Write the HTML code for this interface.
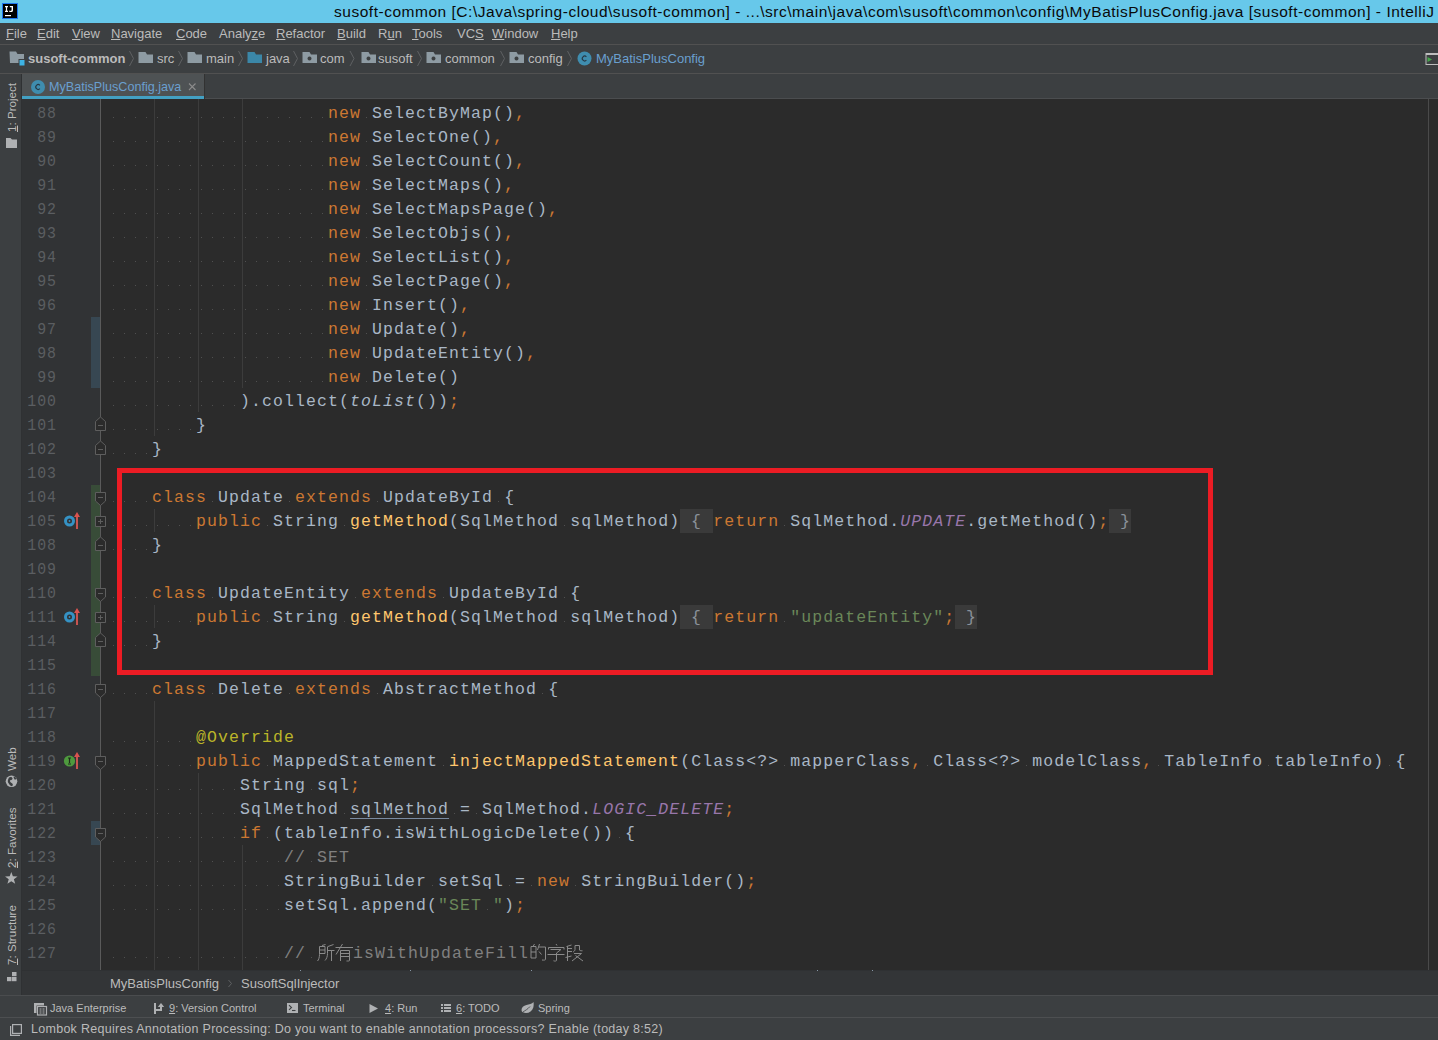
<!DOCTYPE html>
<html><head><meta charset="utf-8"><style>
*{margin:0;padding:0;box-sizing:border-box}
html,body{width:1438px;height:1040px;overflow:hidden;background:#3C3F41;font-family:"Liberation Sans",sans-serif;position:relative}
.abs{position:absolute}
#title{left:0;top:0;width:1438px;height:23px;background:#67C8EA;}
#title .t{position:absolute;left:334px;top:3px;font-size:15.5px;letter-spacing:0.52px;color:#0a0a0a;white-space:nowrap;}
#ij{left:2px;top:3px;width:16px;height:16px;background:#1e7bff;}
#ij div{position:absolute;left:1px;top:1px;width:14px;height:14px;background:#000;}
#menu{left:0;top:23px;width:1438px;height:21px;background:#3C3F41;}
#menu span{position:absolute;top:3px;font-size:13px;color:#BBBBBB;white-space:nowrap}
u{text-decoration:underline;text-decoration-thickness:1px}
.sep{height:1px;background:#515151;left:0;width:1438px}
#nav{left:0;top:45px;width:1438px;height:28px;background:#3C3F41}
#nav span{position:absolute;top:6px;font-size:13px;color:#BBBBBB;white-space:nowrap}
#left{left:0;top:74px;width:22px;height:921px;background:#3C3F41;border-right:1px solid #2F3133}
#tabs{left:22px;top:74px;width:1416px;height:25px;background:#3C3F41}
#tab{left:22px;top:74px;width:182px;height:25px;background:#4E5254}
#tabline{left:22px;top:96px;width:182px;height:3px;background:#43A0C3}
#gutter{left:22px;top:99px;width:78px;height:872px;background:#313335}
#editor{left:101px;top:99px;width:1337px;height:872px;background:#2B2B2B}

#gutterlayer,#codelayer{position:absolute;left:0;top:0;width:1438px;height:1040px}
.ln{position:absolute;left:21px;width:36px;transform:scaleX(.9);transform-origin:100% 50%;text-align:right;font-family:"Liberation Mono",monospace;font-size:16.5px;letter-spacing:1.1px;color:#5B5E61;line-height:24px;height:24px;padding-top:2px}
.code{position:absolute;left:108px;font-family:"Liberation Mono",monospace;font-size:16.5px;letter-spacing:1.1px;color:#A9B7C6;line-height:24px;height:24px;white-space:pre;padding-top:2px}
.k{color:#CC7832}.m{color:#FFC66D}.s{color:#6A8759}.c{color:#808080}.a{color:#BBB529}.st{color:#9876AA;font-style:italic}.i{font-style:italic}
.u{text-decoration:underline;text-underline-offset:4px;text-decoration-color:#7A8AA0}
.fold{position:absolute;height:24px;background:#3A3A3A}
.fold span{position:absolute;left:11px;top:0;font-family:"Liberation Mono",monospace;font-size:16.5px;line-height:24px;color:#8A9199;padding-top:1px}
.cjk{display:inline-block;color:#808080;font-size:16px;letter-spacing:0;overflow:hidden;vertical-align:top}
#crumb{left:22px;top:970px;width:1416px;height:25px;background:#333537;border-top:1px solid #2F3133}
#crumb span{position:absolute;top:5px;font-size:13px;color:#BBBBBB;white-space:nowrap}
#tools{left:0;top:995px;width:1438px;height:22px;background:#3C3F41;border-top:1px solid #4A4C4E}
#tools span{position:absolute;top:6px;font-size:11px;color:#BBBBBB;white-space:nowrap}
#status{left:0;top:1017px;width:1438px;height:23px;background:#3C3F41;border-top:1px solid #4D4F51}
#status span{position:absolute;top:4px;font-size:12.5px;letter-spacing:0.28px;color:#BBBBBB;white-space:nowrap}
.vt{position:absolute;transform-origin:0 0;transform:rotate(-90deg);font-size:11.6px;color:#BBBBBB;white-space:nowrap}
#redbox{left:117px;top:468px;width:1096px;height:207px;border:5px solid #EC1C24}

</style></head><body>
<div id="title" class="abs">
  <div class="abs" style="left:2px;top:3px;width:16px;height:16px;background:#1f78f0"></div>
  <div class="abs" style="left:3px;top:4px;width:14px;height:14px;background:#000"></div>
  <svg class="abs" style="left:0;top:0" width="20" height="20"><g fill="#fff"><path d="M5 6h3v1.2h-.9v3.6h.9V12H5v-1.2h.9V7.2H5z"/><path d="M9.8 6h3.2v4.2c0 1.3-.8 1.9-2 1.9c-.8 0-1.4-.2-2-.6l.6-1c.4.3.8.4 1.2.4c.5 0 .8-.3.8-.8V7.2h-1.8z"/><rect x="5" y="15" width="6" height="1.2"/></g></svg>
  <div class="t">susoft-common [C:\Java\spring-cloud\susoft-common] - ...\src\main\java\com\susoft\common\config\MyBatisPlusConfig.java [susoft-common] - IntelliJ IDEA</div>
</div>
<div id="menu" class="abs">
  <span style="left:6px"><u>F</u>ile</span>
  <span style="left:37px"><u>E</u>dit</span>
  <span style="left:72px"><u>V</u>iew</span>
  <span style="left:111px"><u>N</u>avigate</span>
  <span style="left:176px"><u>C</u>ode</span>
  <span style="left:219px">Analy<u>z</u>e</span>
  <span style="left:276px"><u>R</u>efactor</span>
  <span style="left:337px"><u>B</u>uild</span>
  <span style="left:378px">R<u>u</u>n</span>
  <span style="left:412px"><u>T</u>ools</span>
  <span style="left:457px">VC<u>S</u></span>
  <span style="left:492px"><u>W</u>indow</span>
  <span style="left:551px"><u>H</u>elp</span>
</div>
<div class="abs sep" style="top:44px"></div>
<div id="nav" class="abs">
  <span style="left:28px;font-weight:bold">susoft-common</span>
  <span style="left:157px">src</span>
  <span style="left:206px">main</span>
  <span style="left:266px">java</span>
  <span style="left:320px">com</span>
  <span style="left:378px">susoft</span>
  <span style="left:445px">common</span>
  <span style="left:528px">config</span>
  <span style="left:596px;color:#6A9FCF">MyBatisPlusConfig</span>
</div>
<svg class="abs" style="left:0;top:45px" width="720" height="28">
  <g fill="#8E9BA3">
    <path d="M9.5 6.5h6.5l1.5 2.5h6.5v9h-14z"/>
    <path d="M138.5 7h7l1.5 2.5h6v8.5h-14.5z"/>
    <path d="M187.5 7h7l1.5 2.5h6v8.5h-14.5z"/>
    <path d="M302.5 7h7l1.5 2.5h6v8.5h-14.5z M309.5 11.5a2 2 0 1 0 0.01 0z" fill-rule="evenodd"/>
    <path d="M361.5 7h7l1.5 2.5h6v8.5h-14.5z M368.5 11.5a2 2 0 1 0 0.01 0z" fill-rule="evenodd"/>
    <path d="M426.5 7h7l1.5 2.5h6v8.5h-14.5z M433.5 11.5a2 2 0 1 0 0.01 0z" fill-rule="evenodd"/>
    <path d="M509.5 7h7l1.5 2.5h6v8.5h-14.5z M516.5 11.5a2 2 0 1 0 0.01 0z" fill-rule="evenodd"/>
  </g>
  <path d="M247.5 7h7l1.5 2.5h6v8.5h-14.5z" fill="#3B87A8"/>
  <rect x="19" y="14.5" width="6" height="6.5" fill="#3DB2E3" stroke="#3C3F41" stroke-width="1"/>
  <circle cx="584.5" cy="13.5" r="7" fill="#3F8DAF"/>
  <path d="M586.4 11.8a2.4 2.4 0 1 0 0 3.4" fill="none" stroke="#263845" stroke-width="1.1"/>
  <g fill="none" stroke="#5F6163" stroke-width="1">
    <path d="M129.5 6l4 7.5l-4 7.5"/>
    <path d="M178.5 6l4 7.5l-4 7.5"/>
    <path d="M238.5 6l4 7.5l-4 7.5"/>
    <path d="M293.5 6l4 7.5l-4 7.5"/>
    <path d="M350 6l4 7.5l-4 7.5"/>
    <path d="M417.5 6l4 7.5l-4 7.5"/>
    <path d="M500.5 6l4 7.5l-4 7.5"/>
    <path d="M567.5 6l4 7.5l-4 7.5"/>
  </g>
</svg>
<svg class="abs" style="left:1422px;top:45px" width="16" height="28">
  <rect x="4" y="8.5" width="14" height="11" fill="none" stroke="#BDBDBD" stroke-width="1"/>
  <rect x="4" y="8" width="14" height="2" fill="#BDBDBD"/>
  <path d="M5.5 12l4.5 2.5l-4.5 2.5z" fill="#45A84B"/>
</svg>
<div class="abs sep" style="top:73px"></div>
<div id="left" class="abs">
  <div class="vt" style="left:5.3px;top:57.6px"><u>1</u>: Project</div>
  <div class="vt" style="left:5.3px;top:696.5px">Web</div>
  <div class="vt" style="left:5.3px;top:793.7px"><u>2</u>: Favorites</div>
  <div class="vt" style="left:5.3px;top:891px"><u>7</u>: Structure</div>
  <svg class="abs" style="left:0;top:0" width="22" height="921">
    <path d="M6 64h4.5l1.5 1.5h5v8.5h-11z" fill="#AFB1B3"/>
    <circle cx="11.5" cy="707.3" r="5.8" fill="#AFB1B3"/>
    <path d="M9 703.5c1.5-1 3-.5 3.5.8c.3 1.2-1 2-2.2 1.8c-1 1.5 .5 2.8 2 3.5c1 .8 .5 2.2-.5 2.6c-1.6-.5-2.6-2-3.6-3.5c-.8-1.4-.3-3.4 .8-5.2z M13.5 702.5c1.4.3 2.6 1.2 3.2 2.5l-1.8 .8c-.6-.7-1.2-1.5-1.4-3.3z" fill="#3C3F41"/>
    <path d="M11.30 797.90L12.89 802.32L17.58 802.46L13.87 805.33L15.18 809.84L11.30 807.20L7.42 809.84L8.73 805.33L5.02 802.46L9.71 802.32Z" fill="#AFB1B3"/>
    <rect x="12" y="898" width="4.5" height="4.2" fill="#AFB1B3"/>
    <rect x="7" y="903" width="4.5" height="4.2" fill="#AFB1B3"/>
    <rect x="12" y="903" width="4.5" height="4.2" fill="#AFB1B3"/>
  </svg>
</div>
<div id="tabs" class="abs"></div>
<div id="tab" class="abs"></div>
<div class="abs" style="left:204px;top:98px;width:1234px;height:1px;background:#4B4D4F"></div>
<div class="abs" style="left:204px;top:74px;width:1px;height:25px;background:#323232"></div>
<div id="tabline" class="abs"></div>
<svg class="abs" style="left:22px;top:74px" width="182" height="22">
  <circle cx="16" cy="13" r="7" fill="#3F8DAF"/>
  <path d="M17.9 11.3a2.4 2.4 0 1 0 0 3.4" fill="none" stroke="#263845" stroke-width="1.1"/>
  <path d="M167 9.5l6.5 6.5M173.5 9.5l-6.5 6.5" stroke="#8C8C8C" stroke-width="1.1"/>
</svg>
<div class="abs" style="left:49px;top:80px;font-size:12.6px;color:#6A9FCF;white-space:nowrap">MyBatisPlusConfig.java</div>
<div id="gutter" class="abs"></div>
<div id="editor" class="abs"></div>
<div class="abs" style="left:1428px;top:99px;width:1px;height:872px;background:#4A4A4A"></div>
<div id="gutterlayer"><div class="ln" style="top:100px">88</div><div class="ln" style="top:124px">89</div><div class="ln" style="top:148px">90</div><div class="ln" style="top:172px">91</div><div class="ln" style="top:196px">92</div><div class="ln" style="top:220px">93</div><div class="ln" style="top:244px">94</div><div class="ln" style="top:268px">95</div><div class="ln" style="top:292px">96</div><div class="ln" style="top:316px">97</div><div class="ln" style="top:340px">98</div><div class="ln" style="top:364px">99</div><div class="ln" style="top:388px">100</div><div class="ln" style="top:412px">101</div><div class="ln" style="top:436px">102</div><div class="ln" style="top:460px">103</div><div class="ln" style="top:484px">104</div><div class="ln" style="top:508px">105</div><div class="ln" style="top:532px">108</div><div class="ln" style="top:556px">109</div><div class="ln" style="top:580px">110</div><div class="ln" style="top:604px">111</div><div class="ln" style="top:628px">114</div><div class="ln" style="top:652px">115</div><div class="ln" style="top:676px">116</div><div class="ln" style="top:700px">117</div><div class="ln" style="top:724px">118</div><div class="ln" style="top:748px">119</div><div class="ln" style="top:772px">120</div><div class="ln" style="top:796px">121</div><div class="ln" style="top:820px">122</div><div class="ln" style="top:844px">123</div><div class="ln" style="top:868px">124</div><div class="ln" style="top:892px">125</div><div class="ln" style="top:916px">126</div><div class="ln" style="top:940px">127</div></div><div id="codelayer"><svg class="abs" style="left:0;top:0" width="1438" height="1040"><rect x="91" y="317" width="9" height="71" fill="#374752"/><rect x="91" y="485" width="9" height="191" fill="#384C38"/><rect x="91" y="821" width="9" height="24" fill="#374752"/><rect x="100" y="99" width="1" height="872" fill="#5A5A5A"/><path fill="#2B2B2B" stroke="#5E5E5E" stroke-width="1" d="M95.5 430.5H105.5V421.5L100.5 417.0L95.5 421.5Z"/><path stroke="#5E5E5E" d="M98 425.5H103"/><path fill="#2B2B2B" stroke="#5E5E5E" stroke-width="1" d="M95.5 454.5H105.5V445.5L100.5 441.0L95.5 445.5Z"/><path stroke="#5E5E5E" d="M98 449.5H103"/><path fill="#2B2B2B" stroke="#5E5E5E" stroke-width="1" d="M95.5 550.5H105.5V541.5L100.5 537.0L95.5 541.5Z"/><path stroke="#5E5E5E" d="M98 545.5H103"/><path fill="#2B2B2B" stroke="#5E5E5E" stroke-width="1" d="M95.5 646.5H105.5V637.5L100.5 633.0L95.5 637.5Z"/><path stroke="#5E5E5E" d="M98 641.5H103"/><path fill="#2B2B2B" stroke="#5E5E5E" stroke-width="1" d="M95.5 492.5H105.5V501.0L100.5 505.5L95.5 501.0Z"/><path stroke="#5E5E5E" d="M98 497.5H103"/><path fill="#2B2B2B" stroke="#5E5E5E" stroke-width="1" d="M95.5 588.5H105.5V597.0L100.5 601.5L95.5 597.0Z"/><path stroke="#5E5E5E" d="M98 593.5H103"/><path fill="#2B2B2B" stroke="#5E5E5E" stroke-width="1" d="M95.5 684.5H105.5V693.0L100.5 697.5L95.5 693.0Z"/><path stroke="#5E5E5E" d="M98 689.5H103"/><path fill="#2B2B2B" stroke="#5E5E5E" stroke-width="1" d="M95.5 756.5H105.5V765.0L100.5 769.5L95.5 765.0Z"/><path stroke="#5E5E5E" d="M98 761.5H103"/><path fill="#2B2B2B" stroke="#5E5E5E" stroke-width="1" d="M95.5 828.5H105.5V837.0L100.5 841.5L95.5 837.0Z"/><path stroke="#5E5E5E" d="M98 833.5H103"/><path fill="#2B2B2B" stroke="#5E5E5E" stroke-width="1" d="M95.5 516.5H105.5V526.5H95.5Z"/><path stroke="#5E5E5E" d="M98 521.5H103M100.5 519.0V524.0"/><path fill="#2B2B2B" stroke="#5E5E5E" stroke-width="1" d="M95.5 612.5H105.5V622.5H95.5Z"/><path stroke="#5E5E5E" d="M98 617.5H103M100.5 615.0V620.0"/><circle cx="69.5" cy="521.0" r="4" fill="none" stroke="#3592C4" stroke-width="3"/><circle cx="69.5" cy="521.0" r="0.9" fill="#3592C4"/><path d="M77 529.0V517.0" stroke="#C75450" stroke-width="2"/><path d="M74 517.0L77 512.0L80 517.0Z" fill="#D9534F"/><circle cx="69.5" cy="617.0" r="4" fill="none" stroke="#3592C4" stroke-width="3"/><circle cx="69.5" cy="617.0" r="0.9" fill="#3592C4"/><path d="M77 625.0V613.0" stroke="#C75450" stroke-width="2"/><path d="M74 613.0L77 608.0L80 613.0Z" fill="#D9534F"/><circle cx="69.5" cy="761.0" r="5.6" fill="#4E9A3E"/><path d="M68 758.0h3M68 764.0h3M69.5 758.0v5" stroke="#1f2a1c" stroke-width="1.2"/><path d="M77 769.0V757.0" stroke="#C75450" stroke-width="2"/><path d="M74 757.0L77 752.0L80 757.0Z" fill="#D9534F"/><rect x="154" y="99" width="1" height="337" fill="#3C3C3C"/><rect x="198" y="99" width="1" height="313" fill="#3C3C3C"/><rect x="242" y="99" width="1" height="289" fill="#3C3C3C"/><rect x="154" y="509" width="1" height="23" fill="#3C3C3C"/><rect x="154" y="605" width="1" height="23" fill="#3C3C3C"/><rect x="154" y="701" width="1" height="270" fill="#3C3C3C"/><rect x="198" y="773" width="1" height="198" fill="#3C3C3C"/><rect x="242" y="845" width="1" height="126" fill="#3C3C3C"/></svg><svg class="abs" style="left:0;top:0" width="1438" height="1040"><path fill="#505050" d="M113 117h1v1h-1zM124 117h1v1h-1zM135 117h1v1h-1zM146 117h1v1h-1zM157 117h1v1h-1zM168 117h1v1h-1zM179 117h1v1h-1zM190 117h1v1h-1zM201 117h1v1h-1zM212 117h1v1h-1zM223 117h1v1h-1zM234 117h1v1h-1zM245 117h1v1h-1zM256 117h1v1h-1zM267 117h1v1h-1zM278 117h1v1h-1zM289 117h1v1h-1zM300 117h1v1h-1zM311 117h1v1h-1zM322 117h1v1h-1zM366 117h1v1h-1zM113 141h1v1h-1zM124 141h1v1h-1zM135 141h1v1h-1zM146 141h1v1h-1zM157 141h1v1h-1zM168 141h1v1h-1zM179 141h1v1h-1zM190 141h1v1h-1zM201 141h1v1h-1zM212 141h1v1h-1zM223 141h1v1h-1zM234 141h1v1h-1zM245 141h1v1h-1zM256 141h1v1h-1zM267 141h1v1h-1zM278 141h1v1h-1zM289 141h1v1h-1zM300 141h1v1h-1zM311 141h1v1h-1zM322 141h1v1h-1zM366 141h1v1h-1zM113 165h1v1h-1zM124 165h1v1h-1zM135 165h1v1h-1zM146 165h1v1h-1zM157 165h1v1h-1zM168 165h1v1h-1zM179 165h1v1h-1zM190 165h1v1h-1zM201 165h1v1h-1zM212 165h1v1h-1zM223 165h1v1h-1zM234 165h1v1h-1zM245 165h1v1h-1zM256 165h1v1h-1zM267 165h1v1h-1zM278 165h1v1h-1zM289 165h1v1h-1zM300 165h1v1h-1zM311 165h1v1h-1zM322 165h1v1h-1zM366 165h1v1h-1zM113 189h1v1h-1zM124 189h1v1h-1zM135 189h1v1h-1zM146 189h1v1h-1zM157 189h1v1h-1zM168 189h1v1h-1zM179 189h1v1h-1zM190 189h1v1h-1zM201 189h1v1h-1zM212 189h1v1h-1zM223 189h1v1h-1zM234 189h1v1h-1zM245 189h1v1h-1zM256 189h1v1h-1zM267 189h1v1h-1zM278 189h1v1h-1zM289 189h1v1h-1zM300 189h1v1h-1zM311 189h1v1h-1zM322 189h1v1h-1zM366 189h1v1h-1zM113 213h1v1h-1zM124 213h1v1h-1zM135 213h1v1h-1zM146 213h1v1h-1zM157 213h1v1h-1zM168 213h1v1h-1zM179 213h1v1h-1zM190 213h1v1h-1zM201 213h1v1h-1zM212 213h1v1h-1zM223 213h1v1h-1zM234 213h1v1h-1zM245 213h1v1h-1zM256 213h1v1h-1zM267 213h1v1h-1zM278 213h1v1h-1zM289 213h1v1h-1zM300 213h1v1h-1zM311 213h1v1h-1zM322 213h1v1h-1zM366 213h1v1h-1zM113 237h1v1h-1zM124 237h1v1h-1zM135 237h1v1h-1zM146 237h1v1h-1zM157 237h1v1h-1zM168 237h1v1h-1zM179 237h1v1h-1zM190 237h1v1h-1zM201 237h1v1h-1zM212 237h1v1h-1zM223 237h1v1h-1zM234 237h1v1h-1zM245 237h1v1h-1zM256 237h1v1h-1zM267 237h1v1h-1zM278 237h1v1h-1zM289 237h1v1h-1zM300 237h1v1h-1zM311 237h1v1h-1zM322 237h1v1h-1zM366 237h1v1h-1zM113 261h1v1h-1zM124 261h1v1h-1zM135 261h1v1h-1zM146 261h1v1h-1zM157 261h1v1h-1zM168 261h1v1h-1zM179 261h1v1h-1zM190 261h1v1h-1zM201 261h1v1h-1zM212 261h1v1h-1zM223 261h1v1h-1zM234 261h1v1h-1zM245 261h1v1h-1zM256 261h1v1h-1zM267 261h1v1h-1zM278 261h1v1h-1zM289 261h1v1h-1zM300 261h1v1h-1zM311 261h1v1h-1zM322 261h1v1h-1zM366 261h1v1h-1zM113 285h1v1h-1zM124 285h1v1h-1zM135 285h1v1h-1zM146 285h1v1h-1zM157 285h1v1h-1zM168 285h1v1h-1zM179 285h1v1h-1zM190 285h1v1h-1zM201 285h1v1h-1zM212 285h1v1h-1zM223 285h1v1h-1zM234 285h1v1h-1zM245 285h1v1h-1zM256 285h1v1h-1zM267 285h1v1h-1zM278 285h1v1h-1zM289 285h1v1h-1zM300 285h1v1h-1zM311 285h1v1h-1zM322 285h1v1h-1zM366 285h1v1h-1zM113 309h1v1h-1zM124 309h1v1h-1zM135 309h1v1h-1zM146 309h1v1h-1zM157 309h1v1h-1zM168 309h1v1h-1zM179 309h1v1h-1zM190 309h1v1h-1zM201 309h1v1h-1zM212 309h1v1h-1zM223 309h1v1h-1zM234 309h1v1h-1zM245 309h1v1h-1zM256 309h1v1h-1zM267 309h1v1h-1zM278 309h1v1h-1zM289 309h1v1h-1zM300 309h1v1h-1zM311 309h1v1h-1zM322 309h1v1h-1zM366 309h1v1h-1zM113 333h1v1h-1zM124 333h1v1h-1zM135 333h1v1h-1zM146 333h1v1h-1zM157 333h1v1h-1zM168 333h1v1h-1zM179 333h1v1h-1zM190 333h1v1h-1zM201 333h1v1h-1zM212 333h1v1h-1zM223 333h1v1h-1zM234 333h1v1h-1zM245 333h1v1h-1zM256 333h1v1h-1zM267 333h1v1h-1zM278 333h1v1h-1zM289 333h1v1h-1zM300 333h1v1h-1zM311 333h1v1h-1zM322 333h1v1h-1zM366 333h1v1h-1zM113 357h1v1h-1zM124 357h1v1h-1zM135 357h1v1h-1zM146 357h1v1h-1zM157 357h1v1h-1zM168 357h1v1h-1zM179 357h1v1h-1zM190 357h1v1h-1zM201 357h1v1h-1zM212 357h1v1h-1zM223 357h1v1h-1zM234 357h1v1h-1zM245 357h1v1h-1zM256 357h1v1h-1zM267 357h1v1h-1zM278 357h1v1h-1zM289 357h1v1h-1zM300 357h1v1h-1zM311 357h1v1h-1zM322 357h1v1h-1zM366 357h1v1h-1zM113 381h1v1h-1zM124 381h1v1h-1zM135 381h1v1h-1zM146 381h1v1h-1zM157 381h1v1h-1zM168 381h1v1h-1zM179 381h1v1h-1zM190 381h1v1h-1zM201 381h1v1h-1zM212 381h1v1h-1zM223 381h1v1h-1zM234 381h1v1h-1zM245 381h1v1h-1zM256 381h1v1h-1zM267 381h1v1h-1zM278 381h1v1h-1zM289 381h1v1h-1zM300 381h1v1h-1zM311 381h1v1h-1zM322 381h1v1h-1zM366 381h1v1h-1zM113 405h1v1h-1zM124 405h1v1h-1zM135 405h1v1h-1zM146 405h1v1h-1zM157 405h1v1h-1zM168 405h1v1h-1zM179 405h1v1h-1zM190 405h1v1h-1zM201 405h1v1h-1zM212 405h1v1h-1zM223 405h1v1h-1zM234 405h1v1h-1zM113 429h1v1h-1zM124 429h1v1h-1zM135 429h1v1h-1zM146 429h1v1h-1zM157 429h1v1h-1zM168 429h1v1h-1zM179 429h1v1h-1zM190 429h1v1h-1zM113 453h1v1h-1zM124 453h1v1h-1zM135 453h1v1h-1zM146 453h1v1h-1zM113 501h1v1h-1zM124 501h1v1h-1zM135 501h1v1h-1zM146 501h1v1h-1zM212 501h1v1h-1zM289 501h1v1h-1zM377 501h1v1h-1zM498 501h1v1h-1zM113 525h1v1h-1zM124 525h1v1h-1zM135 525h1v1h-1zM146 525h1v1h-1zM157 525h1v1h-1zM168 525h1v1h-1zM179 525h1v1h-1zM190 525h1v1h-1zM267 525h1v1h-1zM344 525h1v1h-1zM564 525h1v1h-1zM784 525h1v1h-1zM113 549h1v1h-1zM124 549h1v1h-1zM135 549h1v1h-1zM146 549h1v1h-1zM113 597h1v1h-1zM124 597h1v1h-1zM135 597h1v1h-1zM146 597h1v1h-1zM212 597h1v1h-1zM355 597h1v1h-1zM443 597h1v1h-1zM564 597h1v1h-1zM113 621h1v1h-1zM124 621h1v1h-1zM135 621h1v1h-1zM146 621h1v1h-1zM157 621h1v1h-1zM168 621h1v1h-1zM179 621h1v1h-1zM190 621h1v1h-1zM267 621h1v1h-1zM344 621h1v1h-1zM564 621h1v1h-1zM784 621h1v1h-1zM113 645h1v1h-1zM124 645h1v1h-1zM135 645h1v1h-1zM146 645h1v1h-1zM113 693h1v1h-1zM124 693h1v1h-1zM135 693h1v1h-1zM146 693h1v1h-1zM212 693h1v1h-1zM289 693h1v1h-1zM377 693h1v1h-1zM542 693h1v1h-1zM113 741h1v1h-1zM124 741h1v1h-1zM135 741h1v1h-1zM146 741h1v1h-1zM157 741h1v1h-1zM168 741h1v1h-1zM179 741h1v1h-1zM190 741h1v1h-1zM113 765h1v1h-1zM124 765h1v1h-1zM135 765h1v1h-1zM146 765h1v1h-1zM157 765h1v1h-1zM168 765h1v1h-1zM179 765h1v1h-1zM190 765h1v1h-1zM267 765h1v1h-1zM443 765h1v1h-1zM784 765h1v1h-1zM927 765h1v1h-1zM1026 765h1v1h-1zM1158 765h1v1h-1zM1268 765h1v1h-1zM1389 765h1v1h-1zM113 789h1v1h-1zM124 789h1v1h-1zM135 789h1v1h-1zM146 789h1v1h-1zM157 789h1v1h-1zM168 789h1v1h-1zM179 789h1v1h-1zM190 789h1v1h-1zM201 789h1v1h-1zM212 789h1v1h-1zM223 789h1v1h-1zM234 789h1v1h-1zM311 789h1v1h-1zM113 813h1v1h-1zM124 813h1v1h-1zM135 813h1v1h-1zM146 813h1v1h-1zM157 813h1v1h-1zM168 813h1v1h-1zM179 813h1v1h-1zM190 813h1v1h-1zM201 813h1v1h-1zM212 813h1v1h-1zM223 813h1v1h-1zM234 813h1v1h-1zM344 813h1v1h-1zM454 813h1v1h-1zM476 813h1v1h-1zM113 837h1v1h-1zM124 837h1v1h-1zM135 837h1v1h-1zM146 837h1v1h-1zM157 837h1v1h-1zM168 837h1v1h-1zM179 837h1v1h-1zM190 837h1v1h-1zM201 837h1v1h-1zM212 837h1v1h-1zM223 837h1v1h-1zM234 837h1v1h-1zM267 837h1v1h-1zM619 837h1v1h-1zM113 861h1v1h-1zM124 861h1v1h-1zM135 861h1v1h-1zM146 861h1v1h-1zM157 861h1v1h-1zM168 861h1v1h-1zM179 861h1v1h-1zM190 861h1v1h-1zM201 861h1v1h-1zM212 861h1v1h-1zM223 861h1v1h-1zM234 861h1v1h-1zM245 861h1v1h-1zM256 861h1v1h-1zM267 861h1v1h-1zM278 861h1v1h-1zM311 861h1v1h-1zM113 885h1v1h-1zM124 885h1v1h-1zM135 885h1v1h-1zM146 885h1v1h-1zM157 885h1v1h-1zM168 885h1v1h-1zM179 885h1v1h-1zM190 885h1v1h-1zM201 885h1v1h-1zM212 885h1v1h-1zM223 885h1v1h-1zM234 885h1v1h-1zM245 885h1v1h-1zM256 885h1v1h-1zM267 885h1v1h-1zM278 885h1v1h-1zM432 885h1v1h-1zM509 885h1v1h-1zM531 885h1v1h-1zM575 885h1v1h-1zM113 909h1v1h-1zM124 909h1v1h-1zM135 909h1v1h-1zM146 909h1v1h-1zM157 909h1v1h-1zM168 909h1v1h-1zM179 909h1v1h-1zM190 909h1v1h-1zM201 909h1v1h-1zM212 909h1v1h-1zM223 909h1v1h-1zM234 909h1v1h-1zM245 909h1v1h-1zM256 909h1v1h-1zM267 909h1v1h-1zM278 909h1v1h-1zM487 909h1v1h-1zM113 957h1v1h-1zM124 957h1v1h-1zM135 957h1v1h-1zM146 957h1v1h-1zM157 957h1v1h-1zM168 957h1v1h-1zM179 957h1v1h-1zM190 957h1v1h-1zM201 957h1v1h-1zM212 957h1v1h-1zM223 957h1v1h-1zM234 957h1v1h-1zM245 957h1v1h-1zM256 957h1v1h-1zM267 957h1v1h-1zM278 957h1v1h-1zM311 957h1v1h-1z"/></svg><div class="fold" style="left:680px;top:509px;width:33px"><span>{</span></div><div class="fold" style="left:1109px;top:509px;width:22px"><span style="left:11px">}</span></div><div class="fold" style="left:680px;top:605px;width:33px"><span>{</span></div><div class="fold" style="left:955px;top:605px;width:22px"><span style="left:11px">}</span></div><div class="code" style="left:328px;top:100px"><span class="k">new</span><span> </span><span>SelectByMap()</span><span class="k">,</span></div><div class="code" style="left:328px;top:124px"><span class="k">new</span><span> </span><span>SelectOne()</span><span class="k">,</span></div><div class="code" style="left:328px;top:148px"><span class="k">new</span><span> </span><span>SelectCount()</span><span class="k">,</span></div><div class="code" style="left:328px;top:172px"><span class="k">new</span><span> </span><span>SelectMaps()</span><span class="k">,</span></div><div class="code" style="left:328px;top:196px"><span class="k">new</span><span> </span><span>SelectMapsPage()</span><span class="k">,</span></div><div class="code" style="left:328px;top:220px"><span class="k">new</span><span> </span><span>SelectObjs()</span><span class="k">,</span></div><div class="code" style="left:328px;top:244px"><span class="k">new</span><span> </span><span>SelectList()</span><span class="k">,</span></div><div class="code" style="left:328px;top:268px"><span class="k">new</span><span> </span><span>SelectPage()</span><span class="k">,</span></div><div class="code" style="left:328px;top:292px"><span class="k">new</span><span> </span><span>Insert()</span><span class="k">,</span></div><div class="code" style="left:328px;top:316px"><span class="k">new</span><span> </span><span>Update()</span><span class="k">,</span></div><div class="code" style="left:328px;top:340px"><span class="k">new</span><span> </span><span>UpdateEntity()</span><span class="k">,</span></div><div class="code" style="left:328px;top:364px"><span class="k">new</span><span> </span><span>Delete()</span></div><div class="code" style="left:240px;top:388px"><span>).collect(</span><span class="i">toList</span><span>())</span><span class="k">;</span></div><div class="code" style="left:196px;top:412px"><span>}</span></div><div class="code" style="left:152px;top:436px"><span>}</span></div><div class="code" style="left:152px;top:484px"><span class="k">class</span><span> </span><span>Update</span><span> </span><span class="k">extends</span><span> </span><span>UpdateById</span><span> </span><span>{</span></div><div class="code" style="left:196px;top:508px"><span class="k">public</span><span> </span><span>String</span><span> </span><span class="m">getMethod</span><span>(SqlMethod</span><span> </span><span>sqlMethod)</span><span class="sp3">   </span><span class="k">return</span><span> </span><span>SqlMethod.</span><span class="st">UPDATE</span><span>.getMethod()</span><span class="k">;</span><span>  </span></div><div class="code" style="left:152px;top:532px"><span>}</span></div><div class="code" style="left:152px;top:580px"><span class="k">class</span><span> </span><span>UpdateEntity</span><span> </span><span class="k">extends</span><span> </span><span>UpdateById</span><span> </span><span>{</span></div><div class="code" style="left:196px;top:604px"><span class="k">public</span><span> </span><span>String</span><span> </span><span class="m">getMethod</span><span>(SqlMethod</span><span> </span><span>sqlMethod)</span><span class="sp3">   </span><span class="k">return</span><span> </span><span class="s">&quot;updateEntity&quot;</span><span class="k">;</span><span>  </span></div><div class="code" style="left:152px;top:628px"><span>}</span></div><div class="code" style="left:152px;top:676px"><span class="k">class</span><span> </span><span>Delete</span><span> </span><span class="k">extends</span><span> </span><span>AbstractMethod</span><span> </span><span>{</span></div><div class="code" style="left:196px;top:724px"><span class="a">@Override</span></div><div class="code" style="left:196px;top:748px"><span class="k">public</span><span> </span><span>MappedStatement</span><span> </span><span class="m">injectMappedStatement</span><span>(Class&lt;?&gt;</span><span> </span><span>mapperClass</span><span class="k">,</span><span> </span><span>Class&lt;?&gt;</span><span> </span><span>modelClass</span><span class="k">,</span><span> </span><span>TableInfo</span><span> </span><span>tableInfo)</span><span> </span><span>{</span></div><div class="code" style="left:240px;top:772px"><span>String</span><span> </span><span>sql</span><span class="k">;</span></div><div class="code" style="left:240px;top:796px"><span>SqlMethod</span><span> </span><span class=" u">sqlMethod</span><span> </span><span>=</span><span> </span><span>SqlMethod.</span><span class="st">LOGIC_DELETE</span><span class="k">;</span></div><div class="code" style="left:240px;top:820px"><span class="k">if</span><span> </span><span>(tableInfo.isWithLogicDelete())</span><span> </span><span>{</span></div><div class="code" style="left:284px;top:844px"><span class="c">//</span><span> </span><span class="c">SET</span></div><div class="code" style="left:284px;top:868px"><span>StringBuilder</span><span> </span><span>setSql</span><span> </span><span>=</span><span> </span><span class="k">new</span><span> </span><span>StringBuilder()</span><span class="k">;</span></div><div class="code" style="left:284px;top:892px"><span>setSql.append(</span><span class="s">&quot;SET</span><span class="s"> </span><span class="s">&quot;</span><span>)</span><span class="k">;</span></div><div class="code" style="left:284px;top:940px"><span class="c">//</span><span> </span><span class="cjk" style="width:36px"></span><span class="c">isWithUpdateFill</span><span class="cjk" style="width:54px"></span></div><svg class="abs" style="left:0;top:0" width="1438" height="1040"><path fill="none" stroke="#8A8A8A" stroke-width="1" d="M322 945.5l3.5-1M319.5 946.5h5.5v7h-5.5M319.5 950h5.5M319.5 946.5v8c0 3-1 5.5-2 6.5M333.5 944.5l-5.5 2M327.5 946.5v7c0 3-1 5.5-2.5 7M327.5 950.5h7M331.5 950.5v10.5M335.5 947.5h17.5M342.5 944l-6.5 10.5M340.5 950.5v10.5M340.5 950.5h9v10c0 .5-1 .5-3 .5M340.5 953.5h9M340.5 956.5h9M534.5 944l-1.5 2.5M531 946.5h5v11.5h-5zM531 952h5M539.5 944l-2 6M539 947h6.5v12.5c0 .5-1.5 .8-3.5.5M539 951.5l2.5 3M556 944l1 1.5M548.5 949.5v-2h15.5v2M550.5 949.5h10.5l-4.5 3.5v7.5c0 .5-1.5.8-3 .3M547.5 954.5h17M566.5 946.5l5-1.5M567.5 946v15M567.5 948.5h4.5M567.5 951.5h4.5M565.5 957.5l6-1.5M575 945.5v4c0 1-.8 2-2 2.5M575 945.5h4.5v4.5c0 .5 1 .8 3 .8M574 953.5h7.5l-9.5 7.5M575.5 955.5l7.5 5.5"/></svg></div><div id="redbox" class="abs"></div>
<div id="crumb" class="abs">
  <span style="left:88px">MyBatisPlusConfig</span>
  <span style="left:219px">SusoftSqlInjector</span>
  <svg class="abs" style="left:200px;top:0" width="20" height="24"><path d="M6.5 9l3 3.5l-3 3.5" fill="none" stroke="#5F6163" stroke-width="1"/></svg>
</div>
<svg class="abs" style="left:0;top:969px" width="1438" height="2"><g fill="#8796A5"><rect x="300" y="1" width="1" height="1"/><rect x="410" y="1" width="1" height="1"/><rect x="531" y="1" width="1" height="1"/><rect x="817" y="1" width="1" height="1"/><rect x="872" y="1" width="1" height="1"/></g></svg>
<div id="tools" class="abs">
  <span style="left:50px">Java Enterprise</span>
  <span style="left:169px"><u>9</u>: Version Control</span>
  <span style="left:303px">Terminal</span>
  <span style="left:385px"><u>4</u>: Run</span>
  <span style="left:456px"><u>6</u>: TODO</span>
  <span style="left:538px">Spring</span>
  <svg class="abs" style="left:0;top:-995px" width="600" height="1040">
    <g fill="#AFB1B3">
      <path d="M34 1002h10v2.5h-7.5v7.5h-2.5z"/>
      <rect x="37.5" y="1005.5" width="9" height="8.5" fill="none" stroke="#AFB1B3" stroke-width="1.2"/>
      <path d="M39.5 1008h2M39.5 1010h2M39.5 1012h2M42.5 1008h2M42.5 1010h2M42.5 1012h2" stroke="#AFB1B3" stroke-width="1"/>
      <rect x="154" y="1002" width="2" height="11"/>
      <rect x="156" y="1008" width="6" height="2"/>
      <rect x="160" y="1005" width="2" height="4"/>
      <path d="M157.8 1006L161 1002L164.2 1006z"/>
      <rect x="287" y="1002" width="11" height="10"/>
      <path d="M369.5 1003l8.5 4.5l-8.5 4.5z"/>
      <rect x="441" y="1003" width="2" height="2"/><rect x="444" y="1003" width="7" height="2"/>
      <rect x="441" y="1006" width="2" height="2"/><rect x="444" y="1006" width="7" height="2"/>
      <rect x="441" y="1009" width="2" height="2"/><rect x="444" y="1009" width="7" height="2"/>
      <path d="M533.5 1001c-1.5 2-4.5 2.5-7 3c-3 .6-5 2.5-5 5c0 2.2 2.2 3 4.5 3c3.5 0 6.3-2 7.3-5.5c.5-1.8 .5-3.8 .2-5.5z"/>
    </g>
    <path d="M289 1004.2l2.5 2.3l-2.5 2.3" fill="none" stroke="#3C3F41" stroke-width="1.1"/>
    <path d="M292 1009.5h3.5" stroke="#3C3F41" stroke-width="1.1"/>
    <path d="M523 1011c2-1.5 4.5-2.5 7-5.5" fill="none" stroke="#3C3F41" stroke-width="0.8"/>
  </svg>
</div>
<div id="status" class="abs">
  <span style="left:31px">Lombok Requires Annotation Processing: Do you want to enable annotation processors? Enable (today 8:52)</span>
  <svg class="abs" style="left:0;top:0" width="30" height="23">
    <rect x="12.6" y="6.6" width="8.8" height="8.8" fill="none" stroke="#AFB1B3" stroke-width="1.2"/>
    <path d="M10.6 8v9.4h9.4" fill="none" stroke="#AFB1B3" stroke-width="1.2"/>
  </svg>
</div>

</body></html>
